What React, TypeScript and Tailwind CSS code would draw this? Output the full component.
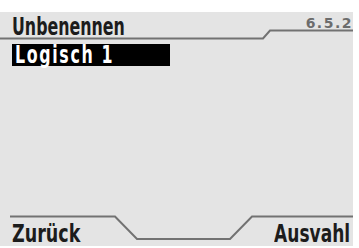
import React from 'react';

const font = { fontFamily: '"DejaVu Sans", "Liberation Sans", sans-serif' };

export default function App() {
  return (
    <div className="w-[359px] h-[248px] bg-white pt-[12px]">
      <div className="relative w-[353px] h-[234px] bg-[#e4e4e4] flex flex-col text-[#1c1c1c]" style={font}>
        {/* header */}
        <div className="flex items-start justify-between h-[28px] pl-[12px]">
          <span className="inline-block origin-left scale-x-[0.66] text-[24px] font-bold leading-none pt-[3px] whitespace-nowrap">
            Unbenennen
          </span>
          <span className="text-[14px] font-bold leading-none text-[#6c6c6c] pt-[4px] tracking-[1.5px]">6.5.2</span>
        </div>
        {/* list */}
        <div className="pt-[4px] pl-[12px]">
          <div className="w-[158px] h-[22px] bg-black pl-[3px] pt-[1px]">
            <span className="inline-block origin-left scale-x-[0.66] text-white text-[24px] font-bold leading-[20px] tracking-[2.5px] whitespace-nowrap">
              Logisch 1
            </span>
          </div>
        </div>
        <div className="flex-1" />
        {/* softkeys */}
        <div className="flex items-end justify-between h-[26px] pl-[12px] pr-[3px]">
          <span className="inline-block origin-left scale-x-[0.73] text-[24px] font-bold leading-none whitespace-nowrap">
            Zurück
          </span>
          <span className="inline-block origin-right scale-x-[0.71] text-[24px] font-bold leading-none whitespace-nowrap">
            Ausvahl
          </span>
        </div>
        {/* frame lines */}
        <svg className="absolute inset-0 pointer-events-none" width="353" height="234" viewBox="0 0 353 234">
          <polyline points="0,26.5 263,26.5 270,18.5 353,18.5" fill="none" stroke="#727272" strokeWidth="2" />
          <polyline points="10,204.5 115,204.5 137,227 230,227 252,204.5 353,204.5" fill="none" stroke="#727272" strokeWidth="2" />
        </svg>
      </div>
    </div>
  );
}
